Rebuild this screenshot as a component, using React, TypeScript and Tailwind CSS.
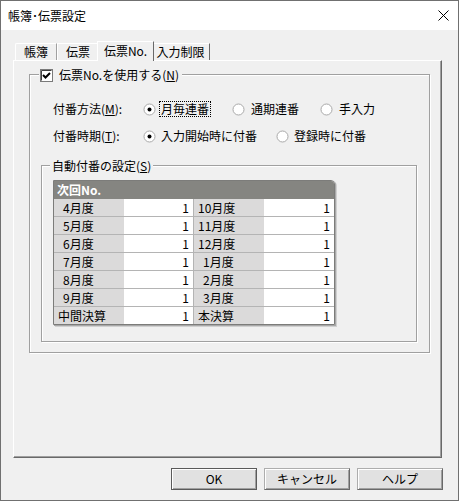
import React from "react";

const rows: [string, string, string, string][] = [
  ["4月度", "1", "10月度", "1"],
  ["5月度", "1", "11月度", "1"],
  ["6月度", "1", "12月度", "1"],
  ["7月度", "1", "1月度", "1"],
  ["8月度", "1", "2月度", "1"],
  ["9月度", "1", "3月度", "1"],
  ["中間決算", "1", "本決算", "1"],
];

function Radio({ checked }: { checked?: boolean }) {
  return (
    <svg width="13" height="13" viewBox="0 0 13 13" className="shrink-0">
      <circle cx="6.5" cy="6.5" r="5.5" fill="#fff" stroke="#a9a9a9" />
      {checked && <circle cx="6.5" cy="6.5" r="2" fill="#000" />}
    </svg>
  );
}

function Check() {
  return (
    <svg width="13" height="13" viewBox="0 0 13 13" className="shrink-0">
      <rect x="0.5" y="0.5" width="12" height="12" fill="#fff" stroke="#7a7a7a" />
      <path d="M1.5 1.5 H11.5 M1.5 1.5 V11.5" stroke="#404040" fill="none" />
      <path d="M3 6 L5.5 8.5 L10 4" stroke="#000" strokeWidth="2" fill="none" />
    </svg>
  );
}

function Label({ text }: { text: string }) {
  const pad = /^\d月/.test(text) ? "pl-[9px]" : "pl-[4px]";
  return <div className={`h-[17px] flex items-center bg-[#dbdada] ${pad}`}>{text}</div>;
}

function Value({ v }: { v: string }) {
  return <div className="h-[17px] flex items-center justify-end bg-white pr-[4px]">{v}</div>;
}

export default function App() {
  return (
    <div className="w-[459px] h-[501px] border border-[#707070] bg-[#f0f0f0] flex flex-col text-[12px] leading-[14px] text-black font-['Noto_Sans_CJK_JP',sans-serif]">
      {/* Title bar */}
      <div className="h-[29px] bg-white flex items-center justify-between pl-[7px] pr-[9px] shrink-0">
        <span>帳簿･伝票設定</span>
        <svg width="11" height="11" viewBox="0 0 11 11">
          <path d="M0.5 0.5 L10.5 10.5 M10.5 0.5 L0.5 10.5" stroke="#000" strokeWidth="1" />
        </svg>
      </div>

      {/* Tabs */}
      <div className="pt-[11px] pl-[12px]">
        <div className="flex h-[19px] items-end pl-[2px]">
          <div className="w-[42px] h-[17px] border-l border-t border-white border-r border-r-[#a0a0a0] flex items-center justify-center rounded-tl-[2px]">
            帳簿
          </div>
          <div className="w-[42px] h-[17px] border-l border-t border-white border-r border-r-[#a0a0a0] flex items-center justify-center">
            伝票
          </div>
          <div className="relative z-10 w-[57px] h-[20px] -mb-[1px] -mx-[2px] bg-[#f0f0f0] border-l border-t border-white border-r border-r-[#696969] flex items-start justify-center pt-[2px]">
            伝票No.
          </div>
          <div className="w-[58px] h-[17px] border-t border-white border-r border-r-[#696969] flex items-center justify-center">
            入力制限
          </div>
        </div>

        {/* Panel */}
        <div className="w-[429px] h-[398px] border-l border-t border-white border-r border-r-[#696969] border-b border-b-[#696969] shadow-[inset_-1px_-1px_0_#a0a0a0] pt-[13px] pl-[15px]">
          {/* Group 1 */}
          <div className="w-[401px] h-[279px] border border-[#a0a0a0] shadow-[inset_1px_1px_0_#fff,1px_1px_0_#fff] flex flex-col">
            <div className="-mt-[8px] ml-[9px] pl-[1px] pr-[3px] h-[16px] w-fit bg-[#f0f0f0] flex items-center gap-[6px]">
              <Check />
              <span>
                伝票No.を使用する(<span className="underline">N</span>)
              </span>
            </div>

            <div className="mt-[18px] ml-[23px] h-[16px] flex items-center">
              <div className="w-[90px]">
                付番方法(<span className="underline">M</span>):
              </div>
              <div className="w-[89px] flex items-center gap-[4px]">
                <Radio checked />
                <span className="outline outline-1 outline-dotted outline-black px-[1px]">月毎連番</span>
              </div>
              <div className="w-[88px] flex items-center gap-[6px]">
                <Radio />
                <span>通期連番</span>
              </div>
              <div className="flex items-center gap-[6px]">
                <Radio />
                <span>手入力</span>
              </div>
            </div>

            <div className="mt-[11px] ml-[23px] h-[16px] flex items-center">
              <div className="w-[90px]">
                付番時期(<span className="underline">T</span>):
              </div>
              <div className="w-[133px] flex items-center gap-[5px]">
                <Radio checked />
                <span>入力開始時に付番</span>
              </div>
              <div className="flex items-center gap-[5px]">
                <Radio />
                <span>登録時に付番</span>
              </div>
            </div>

            {/* Group 2 */}
            <div className="mt-[21px] ml-[11px] w-[376px] h-[177px] border border-[#a0a0a0] shadow-[inset_1px_1px_0_#fff,1px_1px_0_#fff] flex flex-col">
              <div className="-mt-[8px] ml-[8px] px-[2px] h-[16px] w-fit bg-[#f0f0f0] flex items-center">
                自動付番の設定(<span className="underline">S</span>)
              </div>

              {/* Grid */}
              <div className="mt-[6px] ml-[11px] w-[282px] border border-[#7c7c7a] rounded-tr-[4px] shadow-[1px_1px_0_#a8a8a8,2px_2px_0_#d0d0d0] overflow-hidden">
                <div className="h-[18px] bg-[#858581] text-white font-bold flex items-center pl-[3px]">
                  次回No.
                </div>
                {rows.map((r, i) => (
                  <div
                    key={i}
                    className={`grid grid-cols-[70px_69px_1px_70px_70px] ${i < rows.length - 1 ? "border-b border-[#b4b4b4]" : ""}`}
                  >
                    <Label text={r[0]} />
                    <Value v={r[1]} />
                    <div className="bg-[#b4b4b4]" />
                    <Label text={r[2]} />
                    <Value v={r[3]} />
                  </div>
                ))}
              </div>
            </div>
          </div>
        </div>
      </div>

      {/* Buttons */}
      <div className="mt-[10px] flex justify-end gap-[7px] pr-[15px]">
        <button className="w-[86px] h-[22px] border border-[#5a5a5a] bg-[#e1e1e1] shadow-[inset_1px_1px_0_#fff,inset_-1px_-1px_0_#a0a0a0]">
          OK
        </button>
        <button className="w-[86px] h-[22px] border border-[#adadad] border-r-[#696969] border-b-[#696969] bg-[#e1e1e1] shadow-[inset_1px_1px_0_#fff,inset_-1px_-1px_0_#a0a0a0]">
          キャンセル
        </button>
        <button className="w-[86px] h-[22px] border border-[#adadad] border-r-[#696969] border-b-[#696969] bg-[#e1e1e1] shadow-[inset_1px_1px_0_#fff,inset_-1px_-1px_0_#a0a0a0]">
          ヘルプ
        </button>
      </div>
    </div>
  );
}
